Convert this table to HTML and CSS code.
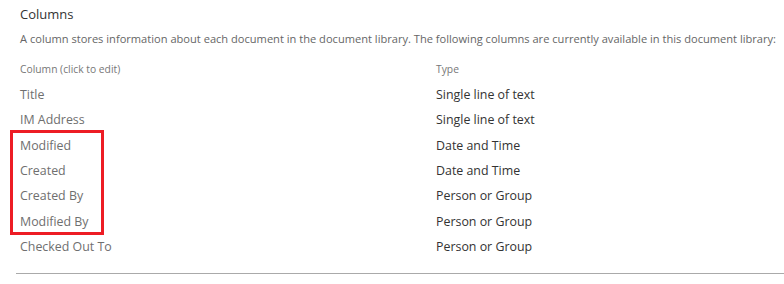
FILE: index.html
```html
<!DOCTYPE html>
<html lang="en">
<head>
<meta charset="utf-8">
<title>Columns</title>
<link rel="stylesheet" href="styles.css">
</head>
<body>
<section class="columns-section">
  <h2 class="section-title">Columns</h2>
  <p class="section-desc">A column stores information about each document in the document library. The following columns are currently available in this document library:</p>
  <div class="col-table">
    <div class="col-head">
      <span>Column (click to edit)</span>
      <span>Type</span>
    </div>
    <div class="col-row"><span class="col-name">Title</span><span class="col-type">Single line of text</span></div>
    <div class="col-row"><span class="col-name">IM Address</span><span class="col-type">Single line of text</span></div>
    <div class="col-row"><span class="col-name">Modified</span><span class="col-type">Date and Time</span></div>
    <div class="col-row"><span class="col-name">Created</span><span class="col-type">Date and Time</span></div>
    <div class="col-row"><span class="col-name">Created By</span><span class="col-type">Person or Group</span></div>
    <div class="col-row"><span class="col-name">Modified By</span><span class="col-type">Person or Group</span></div>
    <div class="col-row"><span class="col-name">Checked Out To</span><span class="col-type">Person or Group</span></div>
    <div class="highlight-box"></div>
  </div>
  <hr class="section-rule">
</section>
</body>
</html>
```

FILE: styles.css
```css
html, body {
  margin: 0;
  padding: 0;
  background: #fff;
}

body {
  font-family: "Open Sans", "Noto Sans", sans-serif;
  color: #444;
}

.columns-section {
  padding: 4px 0 0 20px;
}

.section-title {
  margin: 0;
  font-size: 13px;
  font-weight: 400;
  line-height: 20px;
  color: #333;
}

.section-desc {
  margin: 7px 0 0;
  font-size: 11.1px;
  line-height: 16px;
  color: #666;
  white-space: nowrap;
}

.col-table {
  position: relative;
  margin-top: 14px;
}

.col-head,
.col-row {
  display: grid;
  grid-template-columns: 416px 1fr;
}

.col-head {
  font-size: 10.3px;
  line-height: 16px;
  color: #777;
  margin-bottom: 5px;
}

.col-row {
  font-size: 12.4px;
  line-height: 25.33px;
}

.col-name {
  color: #6f6f6f;
}

.col-type {
  color: #333;
}

/* red annotation frame around the date/author rows */
.highlight-box {
  position: absolute;
  left: -10px;
  top: 69px;
  width: 88px;
  height: 99px;
  border: 3px solid #ed1c24;
}

.section-rule {
  margin: 14px 0 0 -4px;
  border: 0;
  border-top: 1px solid #aaa;
}
```
